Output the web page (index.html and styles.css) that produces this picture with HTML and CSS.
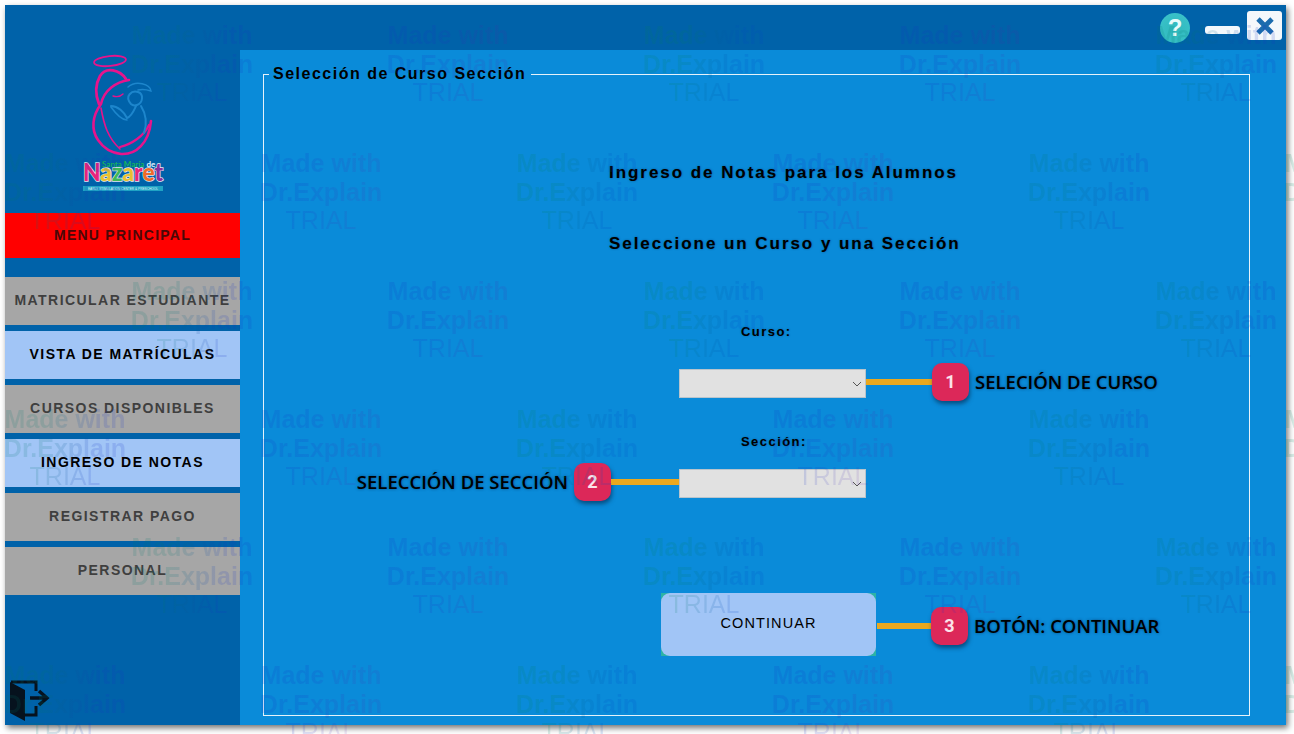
FILE: index.html
```html
<!DOCTYPE html>
<html lang="en">

<head>
    <meta charset="UTF-8">
    <meta name="viewport" content="width=device-width, initial-scale=1.0">
    <title>Ingreso de Notas</title>
    <link rel="stylesheet" href="styles.css">
</head>

<body>

    <div class="window">
        <aside class="sidebar">
            <div class="logo">
                <svg width="90" height="145" viewBox="80 50 90 145">
                    <g fill="none" stroke="#e6148c" stroke-linecap="round">
                        <ellipse cx="110" cy="61" rx="16" ry="5" stroke-width="1.8" transform="rotate(-6 110 61)"/>
                        <path d="M126 79 C120 70 106 66 100 76 C95 85 95 94 99 104" stroke-width="2.8"/>
                        <path d="M129 80 C116 82 104 90 101 104 C92 116 91 130 98 140 C104 149 112 153 121 154 C136 155 149 143 151 121" stroke-width="2.6"/>
                        <path d="M120 147 C132 144 144 136 149 125" stroke-width="2.2"/>
                        <path d="M101 108 C104 125 108 138 120 149" stroke-width="1.6"/>
                        <path d="M113 96 C116 97 120 97 123 94" stroke-width="1.4"/>
                    </g>
                    <g fill="none" stroke="#1d86cc" stroke-linecap="round">
                        <path d="M128 87 C136 80 150 84 151 91 C148 90 142 89 138 90" stroke-width="1.4"/>
                        <path d="M131 104 C124 96 132 90 138 92 C144 94 143 103 137 105 C134 106 132 105 131 104 Z" stroke-width="2"/>
                        <path d="M111 106 C118 106 124 112 127 118 C132 116 134 110 136 106" stroke-width="2"/>
                        <path d="M111 107 C116 114 122 120 127 120" stroke-width="1.6"/>
                        <path d="M141 106 C146 114 147 124 144 133" stroke-width="2"/>
                    </g>
                    <text class="logo-santa" x="102" y="167">Santa María <tspan fill="#e8f4ff">de</tspan></text>
                    <text class="logo-name" x="83" y="181" textLength="80" lengthAdjust="spacingAndGlyphs"><tspan fill="#e8247c">N</tspan><tspan fill="#e8c030">a</tspan><tspan fill="#40b858">z</tspan><tspan fill="#e8c030">a</tspan><tspan fill="#e8247c">r</tspan><tspan fill="#f06a28">e</tspan><tspan fill="#8a2c9c">t</tspan></text>
                    <rect x="83" y="186" width="80" height="5" fill="#1fa3c4"/>
                    <text class="logo-strip" x="123" y="190" text-anchor="middle">EARLY STIMULATION CENTER &amp; PRESCHOOL</text>
                </svg>
            </div>
            <div class="menu-title">MENU PRINCIPAL</div>
            <nav class="menu">
                <a class="menu-item">MATRICULAR ESTUDIANTE</a>
                <a class="menu-item active">VISTA DE MATRÍCULAS</a>
                <a class="menu-item">CURSOS DISPONIBLES</a>
                <a class="menu-item active">INGRESO DE NOTAS</a>
                <a class="menu-item">REGISTRAR PAGO</a>
                <a class="menu-item">PERSONAL</a>
            </nav>
            <div class="exit">
                <svg width="42" height="42" viewBox="0 0 42 42">
                    <path d="M1 2 L16 10 V41 L1 33 Z" fill="#06121e"/>
                    <path d="M2 2 H27 V11 M27 26 V35 H16" fill="none" stroke="#06121e" stroke-width="3"/>
                    <path d="M21 18 H36 M30 11 L38 18 L30 25" fill="none" stroke="#06121e" stroke-width="3.4"/>
                </svg>
            </div>
        </aside>

        <div class="content">
            <header class="topbar">
                <span class="help">?</span>
                <span class="minimize"></span>
                <span class="close">
                    <svg width="20" height="20" viewBox="0 0 20 20">
                        <path d="M3 3 L17 17 M17 3 L3 17" stroke="#1b6cae" stroke-width="4.8"/>
                    </svg>
                </span>
            </header>

            <main class="panel">
                <fieldset class="group">
                    <legend>Selección de Curso Sección</legend>

                    <h2 class="heading first">Ingreso de Notas para los Alumnos</h2>
                    <h2 class="heading second">Seleccione un Curso y una Sección</h2>

                    <label class="field-label label-curso">Curso:</label>
                    <div class="field">
                        <select class="combo"></select>
                        <svg class="chevron" width="10" height="6" viewBox="0 0 10 6">
                            <path d="M1 1 L5 5 L9 1" fill="none" stroke="#555" stroke-width="1"/>
                        </svg>
                        <div class="callout callout-right">
                            <span class="line"></span>
                            <span class="badge">1</span>
                            <span class="callout-text">SELECIÓN DE CURSO</span>
                        </div>
                    </div>

                    <label class="field-label label-seccion">Sección:</label>
                    <div class="field">
                        <select class="combo"></select>
                        <svg class="chevron" width="10" height="6" viewBox="0 0 10 6">
                            <path d="M1 1 L5 5 L9 1" fill="none" stroke="#555" stroke-width="1"/>
                        </svg>
                        <div class="callout callout-left">
                            <span class="callout-text">SELECCIÓN DE SECCIÓN</span>
                            <span class="badge">2</span>
                            <span class="line"></span>
                        </div>
                    </div>

                    <div class="action">
                        <button class="continue"><span>CONTINUAR</span></button>
                        <div class="callout callout-right callout-btn">
                            <span class="line"></span>
                            <span class="badge">3</span>
                            <span class="callout-text">BOTÓN: CONTINUAR</span>
                        </div>
                    </div>
                </fieldset>
            </main>
        </div>
    </div>

    <!-- trial watermark over the whole page -->
    <div class="watermarks">
        <div class="mark-row odd">
            <div class="mark">Made with<br>Dr.Explain<br><i>TRIAL</i></div>
            <div class="mark">Made with<br>Dr.Explain<br><i>TRIAL</i></div>
            <div class="mark">Made with<br>Dr.Explain<br><i>TRIAL</i></div>
            <div class="mark">Made with<br>Dr.Explain<br><i>TRIAL</i></div>
            <div class="mark">Made with<br>Dr.Explain<br><i>TRIAL</i></div>
        </div>
        <div class="mark-row">
            <div class="mark">Made with<br>Dr.Explain<br><i>TRIAL</i></div>
            <div class="mark">Made with<br>Dr.Explain<br><i>TRIAL</i></div>
            <div class="mark">Made with<br>Dr.Explain<br><i>TRIAL</i></div>
            <div class="mark">Made with<br>Dr.Explain<br><i>TRIAL</i></div>
            <div class="mark">Made with<br>Dr.Explain<br><i>TRIAL</i></div>
            <div class="mark">Made with<br>Dr.Explain<br><i>TRIAL</i></div>
        </div>
        <div class="mark-row odd">
            <div class="mark">Made with<br>Dr.Explain<br><i>TRIAL</i></div>
            <div class="mark">Made with<br>Dr.Explain<br><i>TRIAL</i></div>
            <div class="mark">Made with<br>Dr.Explain<br><i>TRIAL</i></div>
            <div class="mark">Made with<br>Dr.Explain<br><i>TRIAL</i></div>
            <div class="mark">Made with<br>Dr.Explain<br><i>TRIAL</i></div>
        </div>
        <div class="mark-row">
            <div class="mark">Made with<br>Dr.Explain<br><i>TRIAL</i></div>
            <div class="mark">Made with<br>Dr.Explain<br><i>TRIAL</i></div>
            <div class="mark">Made with<br>Dr.Explain<br><i>TRIAL</i></div>
            <div class="mark">Made with<br>Dr.Explain<br><i>TRIAL</i></div>
            <div class="mark">Made with<br>Dr.Explain<br><i>TRIAL</i></div>
            <div class="mark">Made with<br>Dr.Explain<br><i>TRIAL</i></div>
        </div>
        <div class="mark-row odd">
            <div class="mark">Made with<br>Dr.Explain<br><i>TRIAL</i></div>
            <div class="mark">Made with<br>Dr.Explain<br><i>TRIAL</i></div>
            <div class="mark">Made with<br>Dr.Explain<br><i>TRIAL</i></div>
            <div class="mark">Made with<br>Dr.Explain<br><i>TRIAL</i></div>
            <div class="mark">Made with<br>Dr.Explain<br><i>TRIAL</i></div>
        </div>
        <div class="mark-row">
            <div class="mark">Made with<br>Dr.Explain<br><i>TRIAL</i></div>
            <div class="mark">Made with<br>Dr.Explain<br><i>TRIAL</i></div>
            <div class="mark">Made with<br>Dr.Explain<br><i>TRIAL</i></div>
            <div class="mark">Made with<br>Dr.Explain<br><i>TRIAL</i></div>
            <div class="mark">Made with<br>Dr.Explain<br><i>TRIAL</i></div>
            <div class="mark">Made with<br>Dr.Explain<br><i>TRIAL</i></div>
        </div>
    </div>

</body>

</html>
```

FILE: styles.css
```css
html,
body {
    height: 100%;
}

body {
    margin: 0;
    background-color: #fff;
    font-family: "Liberation Sans", Arial, sans-serif;
    color: #000;
    overflow: hidden;
    position: relative;
}

.window {
    display: flex;
    width: 1281px;
    height: 720px;
    margin: 5px 0 0 5px;
    background-color: #0062a9;
    box-shadow: 2px 3px 6px rgba(0, 0, 0, 0.55);
}

/* Sidebar */
.sidebar {
    width: 235px;
    flex-shrink: 0;
    display: flex;
    flex-direction: column;
}

.logo {
    height: 208px;
    padding: 45px 0 0 75px;
    box-sizing: border-box;
}

.logo svg {
    display: block;
}

.logo-santa {
    font-family: "Lato", sans-serif;
    font-size: 8px;
    font-weight: 700;
    fill: #17b55c;
}

.logo-name {
    font-family: "Lato", sans-serif;
    font-size: 24px;
    font-weight: 900;
    stroke: #e8e8f0;
    stroke-width: 1.4px;
    paint-order: stroke;
}

.logo-strip {
    font-family: "Liberation Sans", sans-serif;
    font-size: 3.2px;
    fill: #dff4fa;
}

.menu-title {
    height: 45px;
    display: flex;
    align-items: center;
    justify-content: center;
    background-color: #ff0000;
    font-size: 14px;
    font-weight: 700;
    letter-spacing: 1.25px;
    color: #4a0808;
    padding-bottom: 2px;
    box-sizing: border-box;
}

.menu {
    display: flex;
    flex-direction: column;
    gap: 6px;
    margin-top: 19px;
}

.menu-item {
    height: 48px;
    display: flex;
    align-items: center;
    justify-content: center;
    background-color: #a6a6a6;
    font-size: 14px;
    font-weight: 700;
    letter-spacing: 1.45px;
    color: #3f3f3f;
    padding-bottom: 2px;
    box-sizing: border-box;
}

.menu-item.active {
    background-color: #a1c5f6;
    color: #000;
}

.exit {
    margin-top: auto;
    padding: 0 0 3px 4px;
}

.exit svg {
    display: block;
}

/* Top bar */
.content {
    flex: 1;
    display: flex;
    flex-direction: column;
    min-width: 0;
}

.topbar {
    height: 45px;
    flex-shrink: 0;
    display: flex;
    align-items: flex-start;
    justify-content: flex-end;
    padding-right: 4px;
    box-sizing: border-box;
}

.help {
    width: 30px;
    height: 30px;
    margin-top: 8px;
    border-radius: 50%;
    background: radial-gradient(circle at 50% 60%, #2fb8bc, #3cc4cc);
    color: #e6fbfb;
    font-size: 24px;
    font-weight: 700;
    line-height: 30px;
    text-align: center;
}

.minimize {
    width: 35px;
    height: 8px;
    margin: 21px 7px 0 15px;
    border-radius: 3px;
    background-color: #f2f8fc;
}

.close {
    width: 35px;
    height: 29px;
    margin-top: 6px;
    border-radius: 3px;
    background-color: #f4f8fb;
    display: flex;
    align-items: center;
    justify-content: center;
}

/* Main panel */
.panel {
    flex: 1;
    background-color: #0a8bd9;
    padding: 14px 36px 9px 23px;
    display: flex;
    min-height: 0;
}

.group {
    flex: 1;
    margin: 0;
    padding: 0;
    min-width: 0;
    border: 1px solid #e6f2fa;
    display: flex;
    flex-direction: column;
    align-items: flex-start;
}

.group legend {
    margin-left: 5px;
    padding: 0 5px 0 4px;
    font-size: 16px;
    font-weight: 700;
    line-height: 20px;
    letter-spacing: 1.5px;
    white-space: nowrap;
}

.heading {
    margin: 0 0 0 345px;
    font-size: 17px;
    font-weight: 700;
    line-height: 20px;
    letter-spacing: 1.95px;
    white-space: nowrap;
    text-shadow: 0 0 2px rgba(0, 30, 70, 0.5);
}

.heading.first {
    margin-top: 79px;
}

.heading.second {
    margin-top: 51px;
}

.field-label {
    font-size: 13px;
    font-weight: 700;
    line-height: 16px;
    letter-spacing: 1.45px;
    margin-left: 477px;
    text-shadow: 0 0 2px rgba(0, 30, 70, 0.4);
}

.label-curso {
    margin-top: 70px;
    margin-bottom: 29px;
}

.label-seccion {
    margin-top: 36px;
    margin-bottom: 19px;
}

.field {
    position: relative;
    width: 187px;
    height: 29px;
    margin-left: 415px;
}

.combo {
    display: block;
    width: 100%;
    height: 100%;
    appearance: none;
    border: 1px solid #b9c4cc;
    border-radius: 0;
    background-color: #e1e1e1;
}

.chevron {
    position: absolute;
    right: 4px;
    top: 12px;
}

.action {
    position: relative;
    width: 215px;
    height: 63px;
    margin: 95px 0 0 397px;
}

.continue {
    display: block;
    width: 100%;
    height: 100%;
    padding: 0;
    border: none;
    background-color: #2cb3a6;
    font-family: inherit;
}

.continue span {
    display: flex;
    align-items: center;
    justify-content: center;
    height: 100%;
    padding-bottom: 4px;
    box-sizing: border-box;
    border-radius: 9px;
    background-color: #a1c5f6;
    font-size: 14.5px;
    letter-spacing: 1.1px;
    color: #000;
}

/* Numbered callouts drawn over the form */
.callout {
    position: absolute;
    top: 50%;
    display: flex;
    align-items: center;
    margin-top: -2px;
    white-space: nowrap;
    transform: translateY(-50%);
}

.callout-right {
    left: 100%;
}

.callout-left {
    right: 100%;
}

.callout-btn {
    margin-top: 1px;
    margin-left: 1px;
}

.line {
    display: block;
    width: 66px;
    height: 6px;
    background-color: #eba81e;
}

.callout-left .line {
    width: 68px;
}

.callout-btn .line {
    width: 54px;
}

.badge {
    width: 37px;
    height: 38px;
    border-radius: 10px;
    background-color: #dc2859;
    box-shadow: 1px 3px 4px rgba(0, 30, 60, 0.55);
    color: #fbe3ea;
    font-family: "Roboto", sans-serif;
    font-size: 18px;
    font-weight: 700;
    line-height: 38px;
    text-align: center;
}

.callout-text {
    font-family: "Open Sans", sans-serif;
    font-size: 18.5px;
    font-weight: 600;
    color: #000;
    text-shadow: 0 0 3px rgba(0, 30, 70, 0.6);
}

.callout-right .callout-text {
    margin-left: 6px;
}

.callout-left .callout-text {
    margin-right: 6px;
}

/* Watermark */
.watermarks {
    position: absolute;
    top: 21px;
    left: 0;
    right: 0;
    bottom: 0;
    overflow: hidden;
    pointer-events: none;
}

.mark-row {
    display: flex;
    height: 128px;
    margin-left: -63px;
}

.mark-row.odd {
    margin-left: 64px;
}

.mark {
    width: 256px;
    flex-shrink: 0;
    text-align: center;
    font-size: 25px;
    font-weight: 700;
    line-height: 28.5px;
    background: linear-gradient(100deg, rgba(0, 120, 110, 0.15) 30%, rgba(20, 50, 200, 0.15) 70%);
    background-size: 120px 100%;
    background-position: center;
    background-repeat: no-repeat;
    -webkit-background-clip: text;
    background-clip: text;
    color: transparent;
}

.mark i {
    font-style: normal;
    font-weight: 400;
}

.mark:nth-child(2n) {
    background-image: linear-gradient(100deg, rgba(20, 50, 200, 0.15) 30%, rgba(90, 30, 170, 0.11) 70%);
}

.mark:nth-child(3n) {
    background-image: linear-gradient(100deg, rgba(0, 130, 90, 0.15) 30%, rgba(0, 70, 200, 0.15) 70%);
}
```
